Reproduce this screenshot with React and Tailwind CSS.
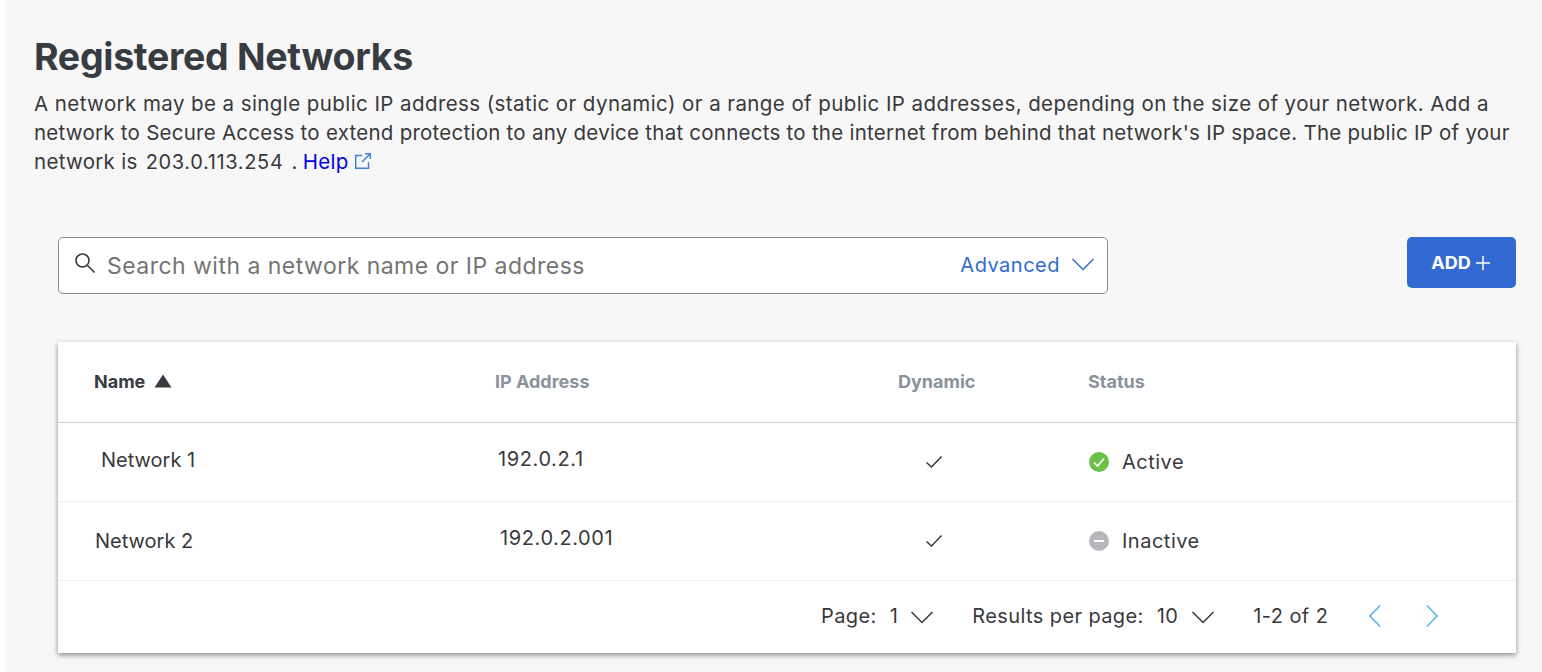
import { useState } from "react";

const COLS = "grid grid-cols-[432px_400px_190px_1fr] items-center";

function Chevron({ className }) {
  return (
    <svg className={className} width="24" height="14" viewBox="0 0 24 14" fill="none" stroke="currentColor" strokeWidth="1.5">
      <path d="M1.5 2 L12 12.5 L22.5 2" />
    </svg>
  );
}

function Check() {
  return (
    <svg width="18" height="14" viewBox="0 0 18 14" fill="none" stroke="#39393b" strokeWidth="1.5">
      <path d="M1.5 7.5 L6.5 12 L16.5 1.5" />
    </svg>
  );
}

function ActiveIcon() {
  return (
    <svg width="20" height="20" viewBox="0 0 20 20">
      <circle cx="10" cy="10" r="10" fill="#6cc04a" />
      <path d="M5 10.5 L8.5 14 L15 6.5" fill="none" stroke="#fff" strokeWidth="1.6" />
    </svg>
  );
}

function InactiveIcon() {
  return (
    <svg width="20" height="20" viewBox="0 0 20 20">
      <circle cx="10" cy="10" r="10" fill="#b6b7ba" />
      <rect x="5" y="9" width="10" height="2" fill="#fff" />
    </svg>
  );
}

export default function App() {
  const [search, setSearch] = useState("");

  return (
    <div className="h-[672px] w-[1542px] overflow-hidden bg-white pl-[6px] font-['Inter',sans-serif] text-[#39393b]">
      <div className="h-full bg-[#f7f7f7] pl-[28px] pt-[33px]">
        {/* Heading */}
        <h1 className="text-[37.5px] leading-[48px] font-bold tracking-[-0.3px] text-[#373c42]">Registered Networks</h1>
        <p className="mt-[8px] w-[1500px] text-[20.5px] leading-[29px] text-[#39393b]">
          <span className="block tracking-[0.42px]">A network may be a single public IP address (static or dynamic) or a range of public IP addresses, depending on the size of your network. Add a</span>
          <span className="block tracking-[0.25px]">network to Secure Access to extend protection to any device that connects to the internet from behind that network's IP space. The public IP of your</span>
          <span className="block tracking-[0.3px]">
            network is <span className="ml-[2px] text-[20px] tracking-[0.65px]">203.0.113.254</span>
            <span className="ml-[8px]">.</span>
            <a href="#" className="ml-[5px] text-[#0000ee]">Help</a>
            <svg className="ml-[5px] inline-block align-[-1px]" width="18" height="18" viewBox="0 0 18 18" fill="none" stroke="#3f7de0" strokeWidth="1.4">
              <path d="M8 3.5 H1.7 V16.3 H14.5 V10" />
              <path d="M8 10 L16.3 1.7 M11 1.7 H16.3 V7" />
            </svg>
          </span>
        </p>

        {/* Search row */}
        <div className="mt-[60px] ml-[24px] flex w-[1458px] items-start justify-between">
          <div className="flex h-[57px] w-[1050px] items-center rounded-[5px] border border-[#858c99] bg-white pr-[12px] pl-[15px]">
            <svg className="mb-[5px]" width="22" height="22" viewBox="0 0 22 22" fill="none" stroke="#39393b" strokeWidth="1.6">
              <circle cx="8.5" cy="8.5" r="6.5" />
              <path d="M13.5 13.5 L20.5 20.5" />
            </svg>
            <input
              value={search}
              onChange={(e) => setSearch(e.target.value)}
              placeholder="Search with a network name or IP address"
              className="mt-[1px] ml-[11px] min-w-0 flex-1 bg-transparent text-[23px] tracking-[0.47px] outline-none placeholder:text-[#747474]"
            />
            <span className="mb-[2px] text-[20px] tracking-[0.5px] text-[#2f6bd1]">Advanced</span>
            <Chevron className="mb-[4px] ml-[11px] text-[#2f6bd1]" />
          </div>
          <button className="flex h-[51px] w-[109px] items-center justify-center gap-[3px] rounded-[5px] bg-[#326ad2] text-[18px] font-bold text-white">
            ADD
            <svg width="18" height="18" viewBox="0 0 18 18" stroke="#fff" strokeWidth="1.5">
              <path d="M9 2 V16 M2 9 H16" />
            </svg>
          </button>
        </div>

        {/* Table card */}
        <div className="mt-[48px] ml-[24px] w-[1458px] bg-white shadow-[0_2px_5px_rgba(0,0,0,0.45)]">
          <div className={`${COLS} h-[81px] border-b border-[#d2d2d6] pb-[2px] text-[18px] font-bold text-[#8a929c]`}>
            <div className="flex items-center pl-[36px] text-[#373c42]">
              Name
              <svg className="ml-[9px]" width="18" height="14" viewBox="0 0 18 14">
                <path d="M9 0.5 L17.5 13.5 H0.5 Z" fill="#373c42" />
              </svg>
            </div>
            <div className="pl-[5px]">IP Address</div>
            <div className="pl-[8px]">Dynamic</div>
            <div className="pl-[8px]">Status</div>
          </div>

          <div className={`${COLS} h-[79px] border-b border-[#f0f0f2] text-[20px]`}>
            <div className="mb-[4px] pl-[43px]">Network 1</div>
            <div className="mb-[6px] pl-[8px] tracking-[0.6px]">192.0.2.1</div>
            <div className="pl-[35px]"><Check /></div>
            <div className="flex items-center pl-[9px]">
              <ActiveIcon />
              <span className="ml-[13px] tracking-[0.5px]">Active</span>
            </div>
          </div>

          <div className={`${COLS} h-[79px] border-b border-[#f0f0f2] text-[20px]`}>
            <div className="pl-[37px]">Network 2</div>
            <div className="mb-[6px] pl-[10px] tracking-[0.6px]">192.0.2.001</div>
            <div className="pl-[35px]"><Check /></div>
            <div className="flex items-center pl-[9px]">
              <InactiveIcon />
              <span className="ml-[13px] tracking-[0.5px]">Inactive</span>
            </div>
          </div>

          {/* Pagination */}
          <div className="flex h-[72px] items-center pb-[2px] pl-[763px] text-[20px] tracking-[0.4px]">
            <span>Page:</span>
            <span className="ml-[13px]">1</span>
            <Chevron className="ml-[12px] mt-[2px]" />
            <span className="ml-[38px]">Results per page:</span>
            <span className="ml-[13px]">10</span>
            <Chevron className="ml-[13px] mt-[2px]" />
            <span className="ml-[38px]">1-2 of 2</span>
            <svg className="ml-[39px]" width="16" height="24" viewBox="0 0 16 24" fill="none" stroke="#5ab3e6" strokeWidth="1.6">
              <path d="M13 1.5 L3 12 L13 22.5" />
            </svg>
            <svg className="ml-[41px]" width="16" height="24" viewBox="0 0 16 24" fill="none" stroke="#5ab3e6" strokeWidth="1.6">
              <path d="M3 1.5 L13 12 L3 22.5" />
            </svg>
          </div>
        </div>
      </div>
    </div>
  );
}
